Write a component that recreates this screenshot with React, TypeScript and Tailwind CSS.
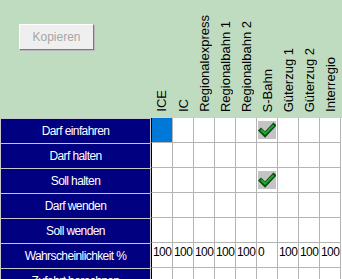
const columns = [
  "ICE",
  "IC",
  "Regionalexpress",
  "Regionalbahn 1",
  "Regionalbahn 2",
  "S-Bahn",
  "Güterzug 1",
  "Güterzug 2",
  "Interregio",
];

type Row = {
  label: string;
  marks?: Record<number, "blue" | "check">;
  values?: string[];
};

const rows: Row[] = [
  { label: "Darf einfahren", marks: { 0: "blue", 5: "check" } },
  { label: "Darf halten" },
  { label: "Soll halten", marks: { 5: "check" } },
  { label: "Darf wenden" },
  { label: "Soll wenden" },
  {
    label: "Wahrscheinlichkeit %",
    values: ["100", "100", "100", "100", "100", "0", "100", "100", "100"],
  },
  { label: "Zufahrt berechnen" },
];

const CheckMark = () => (
  <div className="w-[18px] h-[18px] bg-[#c4c4c4] ml-[1px]">
    <svg width="18" height="18" viewBox="0 0 18 18">
      <polyline
        points="3,9.5 7,13.5 15.5,4.5"
        fill="none"
        stroke="#0b4a12"
        strokeWidth="4.4"
        strokeLinecap="square"
      />
      <polyline
        points="3.6,9.5 7,12.6 15,4.8"
        fill="none"
        stroke="#1fae2e"
        strokeWidth="2"
        strokeLinecap="square"
      />
    </svg>
  </div>
);

const App = () => {
  return (
    <div className="w-[342px] h-[279px] overflow-hidden bg-white font-['Liberation_Sans',Arial,sans-serif]">
      {/* header */}
      <div className="flex h-[118px] bg-[#c0dcc0]">
        <div className="w-[151px] pl-[19px] pt-[24px]">
          <button className="w-[75px] h-[26px] bg-[#efefef] border border-t-white border-l-white border-b-[#7a7a7a] border-r-[#7a7a7a] shadow-[1px_1px_0_#b8b8b8] text-[12px] text-[#a6a6a6]">
            Kopieren
          </button>
        </div>
        {columns.map((col, i) => (
          <div
            key={col}
            className={`${i === 0 ? "w-[22px]" : "w-[21px]"} flex flex-col justify-end items-center pb-[6px]`}
          >
            <span className="[writing-mode:vertical-rl] rotate-180 text-[13px] leading-[14px] text-black whitespace-nowrap">
              {col}
            </span>
          </div>
        ))}
      </div>

      {/* rows */}
      {rows.map((row) => (
        <div key={row.label} className="flex h-[25px]">
          <div className="w-[151px] h-[25px] bg-[#000080] border-t border-x border-t-[#c8c8c8] border-x-[#c8c8c8] flex items-center justify-center text-white text-[12px] tracking-[-0.6px]">
            {row.label}
          </div>
          {columns.map((col, i) => {
            const mark = row.marks?.[i];
            return (
              <div
                key={col}
                className={`${i === 0 ? "w-[22px] border-l border-l-black" : "w-[21px]"} h-[25px] border-r border-b border-r-[#b4b4b4] border-b-[#b4b4b4] flex ${mark === "check" ? "items-center" : "items-start"} ${mark === "blue" ? "bg-[#0078d7]" : "bg-white"}`}
              >
                {mark === "check" && <CheckMark />}
                {row.values && (
                  <span className="text-[12px] leading-[14px] tracking-[-0.6px] text-black pl-[1px] pt-[2px]">
                    {row.values[i]}
                  </span>
                )}
              </div>
            );
          })}
        </div>
      ))}
    </div>
  );
};

export default App;
